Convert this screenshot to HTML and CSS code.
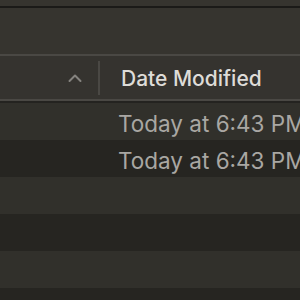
FILE: index.html
```html
<!DOCTYPE html>
<html>
<head>
<meta charset="utf-8">
<link rel="stylesheet" href="styles.css">
</head>
<body>
<div class="window">
  <div class="titlebar"></div>
  <div class="toolbar"></div>
  <div class="header">
    <div class="col-name">
      <svg class="caret" width="14" height="10" viewBox="0 0 14 10"><path d="M1.5 8 L7 2.5 L12.5 8" fill="none" stroke="#85837f" stroke-width="2" stroke-linecap="round" stroke-linejoin="round"/></svg>
    </div>
    <div class="sep"></div>
    <div class="col-date">Date Modified</div>
  </div>
  <div class="gap"></div>
  <div class="rows">
    <div class="row light"><div class="cell-name"></div><div class="cell-date">Today at 6:43 PM</div></div>
    <div class="row dark"><div class="cell-name"></div><div class="cell-date">Today at 6:43 PM</div></div>
    <div class="row light"></div>
    <div class="row dark"></div>
    <div class="row light"></div>
    <div class="row dark short"></div>
  </div>
</div>
</body>
</html>
```
FILE: styles.css
```css
html, body {
  margin: 0;
  padding: 0;
  background: #262521;
}
body {
  width: 300px;
  height: 300px;
  overflow: hidden;
  font-family: Inter, "Liberation Sans", sans-serif;
}
.window {
  display: flex;
  flex-direction: column;
  width: 300px;
  height: 300px;
  overflow: hidden;
}
.titlebar {
  height: 6px;
  background: #36342f;
  border-bottom: 2px solid #1b1a18;
}
.toolbar {
  height: 46px;
  background: #36342f;
  border-bottom: 2px solid #4a4844;
}
.header {
  height: 43px;
  background: #35332f;
  border-bottom: 2px solid #4a4844;
  display: flex;
  align-items: center;
  white-space: nowrap;
}
.col-name {
  width: 98px;
  display: flex;
  justify-content: flex-end;
  align-items: center;
  padding-right: 16px;
  box-sizing: border-box;
}
.caret {
  display: block;
  margin-top: 1px;
}
.sep {
  width: 2px;
  height: 34px;
  background: #4a4844;
}
.col-date {
  padding-left: 21px;
  font-size: 21px;
  font-weight: 500;
  color: #dedcd8;
  margin-top: 2px;
}
.gap {
  height: 2px;
  background: #242320;
}
.rows {
  display: flex;
  flex-direction: column;
}
.row {
  height: 37px;
  display: flex;
  align-items: center;
  white-space: nowrap;
  overflow: hidden;
}
.row.short { height: 11px; }
.row.light { background: #31302b; }
.row.dark { background: #262521; }
.cell-name {
  width: 118px;
  flex: none;
}
.cell-date {
  font-size: 22.5px;
  color: #a9a7a3;
  margin-top: 3px;
}
```
